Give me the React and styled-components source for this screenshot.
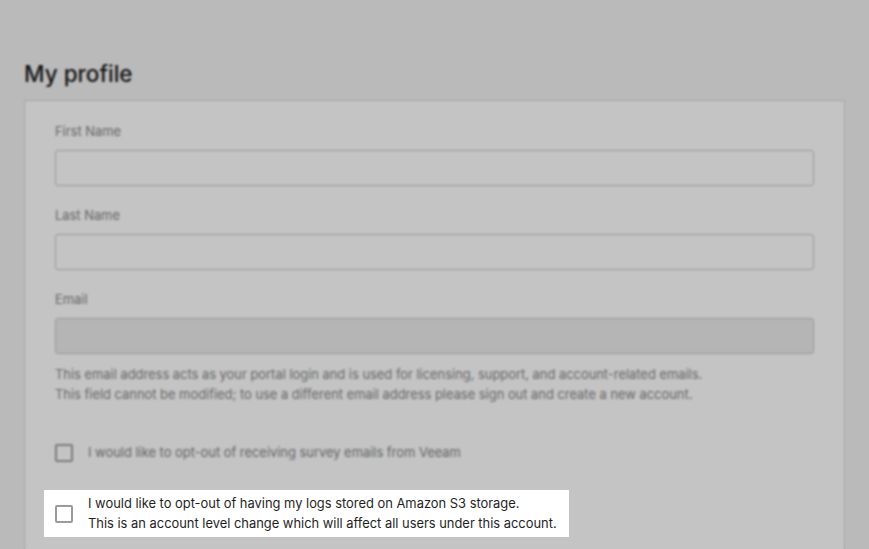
import React from 'react'
import styled, { createGlobalStyle } from 'styled-components'

const GlobalStyle = createGlobalStyle`
  html, body {
    margin: 0;
    background: #f3f3f3;
  }
  body {
    font-family: Inter, "Noto Sans", "Liberation Sans", sans-serif;
    color: #222;
  }
`

// Page layout
// ====================================================
const Page = styled.main`
  padding: 60px 24px 80px 24px;
`
const Title = styled.h1`
  margin: 0 0 12px 0;
  font-size: 22.5px;
  line-height: 28px;
  font-weight: 500;
  color: #1a1a1a;
`
const Card = styled.section`
  background: #fff;
  border: 1px solid #d6d6d6;
  padding: 21px 30px 40px 30px;
  display: flex;
  flex-direction: column;
`
const Field = styled.div`
  display: flex;
  flex-direction: column;
  margin-bottom: ${(p) => (p.$last ? '0' : '20px')};
`
const Label = styled.label`
  font-size: 12.9px;
  line-height: 20px;
  color: #888;
  margin-bottom: 8px;
`
const Input = styled.input`
  box-sizing: border-box;
  height: 36px;
  width: 100%;
  border: 1px solid #c6c6c6;
  border-radius: 3px;
  background: ${(p) => (p.disabled ? '#ececec' : '#fff')};
  outline: none;
`
const Help = styled.p`
  margin: 11px 0 0 0;
  font-size: 12.9px;
  line-height: 20px;
  color: #8a8a8a;
`
const CheckRow = styled.label`
  display: flex;
  align-items: center;
  gap: 15px;
  font-size: 12.9px;
  line-height: 20px;
  color: #858585;
  margin-top: ${(p) => p.$top || '0'};
`
// highlighted by the tour, sits above the dimmed overlay
const Spotlight = styled(CheckRow)`
  position: relative;
  z-index: 20;
  align-self: flex-start;
  margin-left: -11px;
  padding: 4px 12px 3px 11px;
  background: #fff;
  color: #1f1f1f;
`
const Box = styled.span`
  flex: none;
  box-sizing: border-box;
  width: 18px;
  height: 18px;
  border: 2px solid ${(p) => (p.$bright ? '#9a9a9a' : '#a0a0a0')};
  border-radius: 2px;
  background: #fff;
`
const Overlay = styled.div`
  position: fixed;
  inset: 0;
  z-index: 10;
  background: rgba(0, 0, 0, 0.23);
  backdrop-filter: blur(0.8px);
`
// ====================================================

export default function App() {
  return (
    <>
      <GlobalStyle />
      <Page>
        <Title>My profile</Title>
        <Card>
          <Field>
            <Label>First Name</Label>
            <Input />
          </Field>
          <Field>
            <Label>Last Name</Label>
            <Input />
          </Field>
          <Field $last>
            <Label>Email</Label>
            <Input disabled />
          </Field>
          <Help>
            This email address acts as your portal login and is used for licensing, support, and account-related emails.
            <br />
            This field cannot be modified; to use a different email address please sign out and create a new account.
          </Help>
          <CheckRow $top="38px">
            <Box />
            I would like to opt-out of receiving survey emails from Veeam
          </CheckRow>
          <Spotlight $top="27px">
            <Box $bright />
            <span>
              I would like to opt-out of having my logs stored on Amazon S3 storage.
              <br />
              This is an account level change which will affect all users under this account.
            </span>
          </Spotlight>
        </Card>
      </Page>
      <Overlay />
    </>
  )
}
